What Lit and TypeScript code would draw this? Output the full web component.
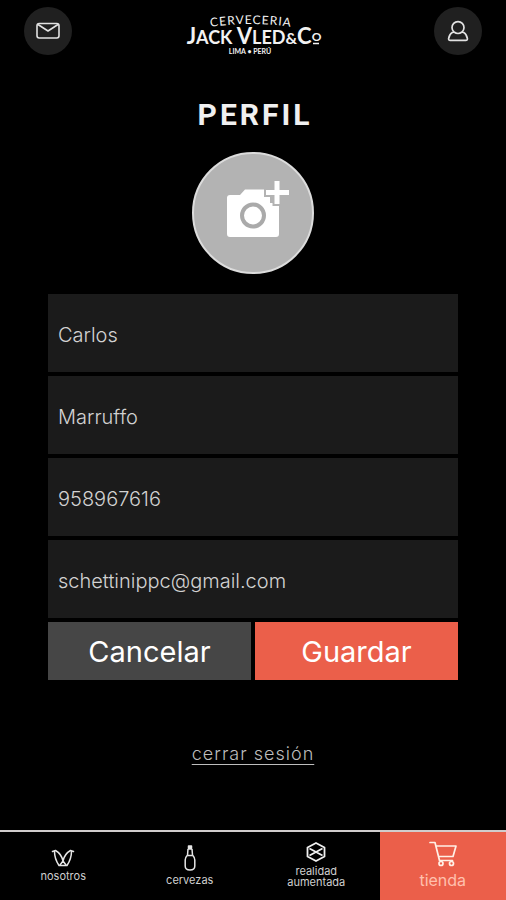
import { LitElement, html, css, svg } from "lit";
import { customElement, state } from "lit/decorators.js";

const iconMail = svg`<svg width="24" height="18" viewBox="0 0 24 18" fill="none" stroke="#e2e2e2" stroke-width="1.6" stroke-linejoin="round" aria-hidden="true">
  <rect x="1" y="1.5" width="22" height="14.5" rx="2.2"/>
  <path d="M2 2.5 L12 9 L22 2.5"/>
</svg>`;

const iconUser = svg`<svg width="22" height="22" viewBox="0 0 22 22" fill="none" stroke="#e2e2e2" stroke-width="1.7" stroke-linejoin="round" aria-hidden="true">
  <path d="M7 12 A6 6 0 1 1 15 12 L17 12.6 C18.600 13.600 20 16.500 20.400 18.600 Q20.500 20.400 18.800 20.400 H3.200 Q1.500 20.400 1.600 18.600 C2 16.500 3.400 13.600 5 12.600 L7 12 Q11 15 15 12"/>
</svg>`;

const iconCamera = svg`<svg width="64" height="58" viewBox="0 0 64 58" aria-hidden="true">
  <path fill="#fff" d="M5 15 H15 L20 9.500 H45 V23 H54 V54 Q54 57 51 57 H5 Q2 57 2 54 V18 Q2 15 5 15 Z"/>
  <circle cx="28" cy="35.500" r="11" fill="#fff" stroke="#aaa" stroke-width="4"/>
  <path d="M49.500 1 H54.500 V10 H64 V15 H54.500 V24 H49.500 V15 H41 V10 H49.500 Z" fill="#fff" stroke="#b3b3b3" stroke-width="4" paint-order="stroke"/>
</svg>`;

const iconHops = svg`<svg width="24" height="18" viewBox="0 0 24 18" fill="none" stroke="#e6e6e6" stroke-width="1.500" stroke-linejoin="round" stroke-linecap="round" aria-hidden="true">
  <path d="M1.500 2.500 L4.500 1.500 C8 3.500 11 7 12 12 C13 7 16 3.500 19.500 1.500 L22.500 2.500"/>
  <path d="M3.500 2.500 C3.500 8 5 12 8 16.500 H16 C19 12 20.500 8 20.500 2.500"/>
  <path d="M12 12 L9 16 M12 12 L15 16"/>
</svg>`;

const iconBottle = svg`<svg width="12" height="26" viewBox="0 0 12 26" fill="none" stroke="#e6e6e6" stroke-width="1.500" stroke-linejoin="round" aria-hidden="true">
  <path d="M4.500 1 H7.500 V4 H4.500 Z" fill="#e6e6e6"/>
  <path d="M4 4 L3.500 10 Q1.200 12.500 1.200 15 V21 Q1.200 25 6 25 Q10.800 25 10.800 21 V15 Q10.800 12.500 8.500 10 L8 4"/>
  <path d="M3.500 10.500 H8.500"/>
</svg>`;

const iconCube = svg`<svg width="20" height="20" viewBox="0 0 20 20" fill="none" stroke="#f0f0f0" stroke-width="1.800" stroke-linejoin="round" aria-hidden="true">
  <path d="M10 1 L18.500 5.500 V14.500 L10 19 L1.500 14.500 V5.500 Z"/>
  <path d="M3.500 6.500 L16.500 13.500 M16.500 6.500 L3.500 13.500"/>
</svg>`;

const iconCart = svg`<svg width="28" height="26" viewBox="0 0 28 26" fill="none" stroke="#fff0e6" stroke-width="1.700" stroke-linejoin="round" stroke-linecap="round" aria-hidden="true">
  <path d="M1 1.500 H6 L10.500 19.500 H23.500 M7 5 H27 L24 15.500 H9.500"/>
  <circle cx="12" cy="22.500" r="2"/>
  <circle cx="22.500" cy="22.500" r="2"/>
</svg>`;

const brand = svg`<svg class="brand" width="140" height="44" viewBox="0 0 140 44" role="img" aria-label="Cervecería Jack Vled &amp; Co">
  <defs><path id="arc" d="M14 18 Q68 8 122 18"/></defs>
  <text class="arched"><textPath href="#arc" startOffset="50%">CERVECERIA</textPath></text>
  <text class="name" x="71" y="33"><tspan class="cap">J</tspan>ACK <tspan class="cap">V</tspan>LED<tspan class="amp">&amp;</tspan><tspan class="cap">C</tspan><tspan class="small" dy="-3">O</tspan></text>
  <path d="M130 32.500 H136" stroke="#f2f2f2" stroke-width="1.500"/>
  <text class="place" x="67" y="43">LIMA • PERÚ</text>
</svg>`;

@customElement("app-root")
export class AppRoot extends LitElement {
  @state() private fields = [
    { id: "nombre", label: "Nombre", type: "text", value: "Carlos" },
    { id: "apellido", label: "Apellido", type: "text", value: "Marruffo" },
    { id: "telefono", label: "Teléfono", type: "tel", value: "958967616" },
    { id: "correo", label: "Correo", type: "email", value: "schettinippc@gmail.com" },
  ];

  static styles = css`
    :host {
      display: flex;
      flex-direction: column;
      min-height: 100vh;
      background: #000;
      color: #d6d6d6;
      font-family: Inter, "Liberation Sans", sans-serif;
    }
    * { box-sizing: border-box; }
    button, input { font: inherit; border: 0; border-radius: 0; margin: 0; }
    button { cursor: pointer; }
    svg { display: block; flex: none; }
    header {
      display: flex;
      justify-content: space-between;
      align-items: flex-end;
      padding: 7px 24px;
    }
    .round {
      display: grid;
      place-items: center;
      width: 48px;
      height: 48px;
      padding: 0;
      border-radius: 50%;
      background: #202020;
    }
    .brand { font-family: Lato, sans-serif; fill: #f2f2f2; }
    .arched { font-size: 12px; letter-spacing: 1px; text-anchor: middle; }
    .name { font-size: 18px; font-weight: 700; text-anchor: middle; }
    .cap { font-size: 22px; }
    .amp { font-size: 16px; }
    .small { font-size: 12px; }
    .place { font-size: 7px; font-weight: 700; text-anchor: middle; }
    main {
      display: flex;
      flex-direction: column;
      align-items: center;
      padding: 32px 48px 40px;
    }
    h1 {
      margin: 0;
      padding-left: 4px;
      font-family: Roboto, sans-serif;
      font-size: 30px;
      line-height: 42px;
      font-weight: 700;
      letter-spacing: 3px;
      color: #f0f0f0;
    }
    .avatar {
      display: grid;
      place-items: center;
      width: 122px;
      height: 122px;
      margin: 16px 0 20px;
      padding: 0 0 8px 8px;
      border: 2px solid #dcdcdc;
      border-radius: 50%;
      background: #b3b3b3;
    }
    form { width: 100%; display: grid; gap: 4px; }
    .field {
      width: 100%;
      height: 78px;
      padding: 4px 10px 0;
      background: #1b1b1b;
      color: #d2d2d2;
      font-size: 20px;
      font-weight: 300;
    }
    .actions { display: grid; grid-template-columns: 1fr 1fr; gap: 4px; }
    .action {
      height: 58px;
      padding: 0;
      background: #464646;
      color: #fff;
      font-size: 29px;
    }
    .primary { background: #eb5f4a; }
    .logout {
      margin-top: 62px;
      color: #bdbdbd;
      font-size: 18px;
      line-height: 24px;
      font-weight: 300;
      letter-spacing: 1px;
      text-underline-offset: 4px;
    }
    nav {
      display: grid;
      grid-template-columns: repeat(4, 1fr);
      margin-top: auto;
      min-height: 70px;
      border-top: 2px solid #d0cccc;
    }
    .tab {
      display: flex;
      flex-direction: column;
      align-items: center;
      justify-content: center;
      gap: 4px;
      padding-bottom: 2px;
      color: #cfcfcf;
      font-size: 11px;
      line-height: 11px;
      text-align: center;
      text-decoration: none;
    }
    .tab span { max-width: 80px; }
    .tab.shop {
      background: #eb5f4a;
      color: #ffc0ae;
      font-size: 16px;
      line-height: 18px;
    }
  `;

  private edit(index: number, e: Event) {
    const value = (e.target as HTMLInputElement).value;
    this.fields = this.fields.map((f, i) => (i === index ? { ...f, value } : f));
  }

  render() {
    return html`
      <header>
        <button class="round" type="button" aria-label="Mensajes">${iconMail}</button>
        ${brand}
        <button class="round" type="button" aria-label="Cuenta">${iconUser}</button>
      </header>
      <main>
        <h1>PERFIL</h1>
        <button class="avatar" type="button" aria-label="Agregar foto">${iconCamera}</button>
        <form @submit=${(e: Event) => e.preventDefault()}>
          ${this.fields.map(
            (f, i) => html`<input class="field" id=${f.id} type=${f.type} aria-label=${f.label} .value=${f.value} spellcheck="false" @input=${(e: Event) => this.edit(i, e)} />`
          )}
          <div class="actions">
            <button class="action" type="button">Cancelar</button>
            <button class="action primary" type="submit">Guardar</button>
          </div>
        </form>
        <a class="logout" href="#salir">cerrar sesión</a>
      </main>
      <nav>
        <a class="tab" href="#nosotros">${iconHops}<span>nosotros</span></a>
        <a class="tab" href="#cervezas">${iconBottle}<span>cervezas</span></a>
        <a class="tab" href="#realidad">${iconCube}<span>realidad aumentada</span></a>
        <a class="tab shop" href="#tienda">${iconCart}<span>tienda</span></a>
      </nav>
    `;
  }
}
